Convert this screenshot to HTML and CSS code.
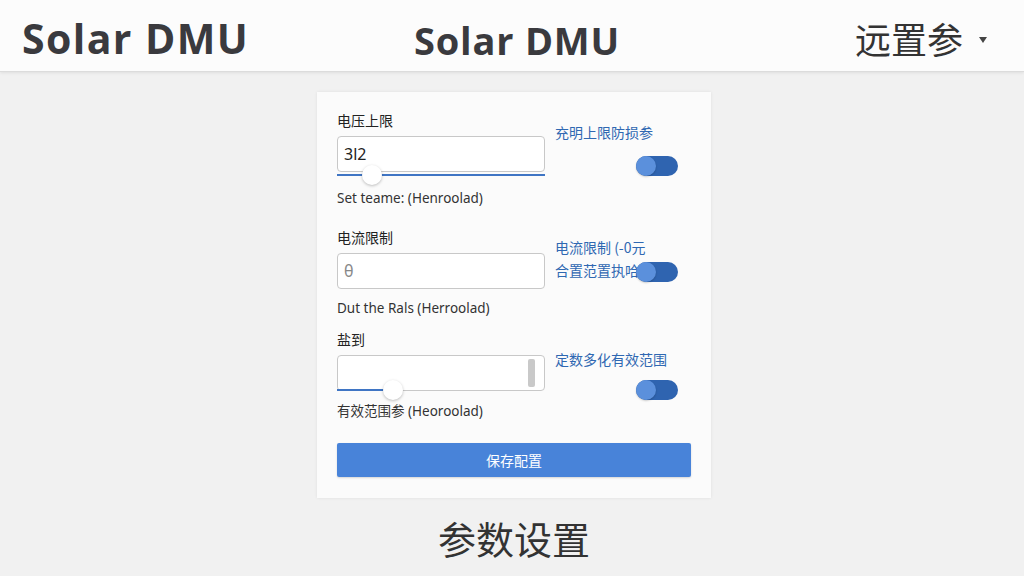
FILE: index.html
```html
<!DOCTYPE html>
<html lang="zh">
<head>
<meta charset="utf-8">
<link rel="stylesheet" href="styles.css">
</head>
<body>
<header class="topbar">
  <div class="brand">Solar DMU</div>
  <div class="brand center">Solar DMU</div>
  <div class="menu">远置参 <span class="caret"></span></div>
</header>
<main class="page">
  <section class="card">
    <div class="row r1">
      <div class="left">
        <div class="label">电压上限</div>
        <div class="input"><span class="val">3l2</span></div>
        <div class="slider"><div class="fill" style="width:100%"></div><div class="thumb" style="left:35px"></div></div>
        <div class="hint">Set teame: (Henroolad)</div>
      </div>
      <div class="right">
        <div class="note">充明上限防损参</div>
        <div class="toggle t1"><span class="knob"></span></div>
      </div>
    </div>
    <div class="row r2">
      <div class="left">
        <div class="label">电流限制</div>
        <div class="input"><span class="ph">θ</span></div>
        <div class="hint h2">Dut the Rals (Herroolad)</div>
      </div>
      <div class="right">
        <div class="note">电流限制 (-0元</div>
        <div class="note-row">
          <span class="note">合置范置执哈</span>
          <div class="toggle t2"><span class="knob"></span></div>
        </div>
      </div>
    </div>
    <div class="row r3">
      <div class="left">
        <div class="label">盐到</div>
        <div class="input tall"><span class="scroll"></span></div>
        <div class="slider s3"><div class="fill" style="width:56px"></div><div class="thumb" style="left:56px"></div></div>
        <div class="hint h3">有效范围参 (Heoroolad)</div>
      </div>
      <div class="right">
        <div class="note">定数多化有效范围</div>
        <div class="toggle t3"><span class="knob"></span></div>
      </div>
    </div>
    <button class="save">保存配置</button>
  </section>
  <h1 class="title">参数设置</h1>
</main>
</body>
</html>
```
FILE: styles.css
```css
* { box-sizing: border-box; }
html, body { margin: 0; padding: 0; }
body {
  width: 1024px;
  height: 576px;
  overflow: hidden;
  background: #f1f1f1;
  font-family: "Noto Sans", "Noto Sans CJK SC", sans-serif;
  color: #333;
}
.topbar {
  height: 72px;
  background: #fcfcfc;
  border-bottom: 1px solid #dcdcdc;
  box-shadow: 0 1px 3px rgba(0,0,0,0.08);
  display: grid;
  grid-template-columns: 1fr auto 1fr;
  align-items: center;
  padding: 0 37px 0 22px;
}
.brand {
  font-family: "Open Sans", sans-serif;
  font-weight: bold;
  font-size: 41px;
  letter-spacing: 1.4px;
  color: #3a3a3e;
  line-height: 1;
  padding-top: 6px;
}
.brand.center {
  font-size: 38px;
  letter-spacing: 0.8px;
  text-align: center;
  padding-top: 8px;
  margin-left: 25px;
}
.menu {
  justify-self: end;
  font-family: "Noto Sans CJK SC", sans-serif;
  font-size: 36px;
  color: #333;
  display: flex;
  align-items: center;
  gap: 16px;
  padding-top: 4px;
}
.caret {
  width: 0; height: 0;
  border-left: 4.5px solid transparent;
  border-right: 4.5px solid transparent;
  border-top: 6px solid #444;
  margin-top: 4px;
}
.page {
  display: flex;
  flex-direction: column;
  align-items: center;
  padding-top: 20px;
  padding-left: 4px;
}
.card {
  width: 394px;
  height: 406px;
  background: #fbfbfb;
  box-shadow: 0 0 3px rgba(0,0,0,0.08);
  padding: 19px 20px 0 20px;
  display: flex;
  flex-direction: column;
}
.row { display: flex; gap: 10px; }
.left { width: 208px; display: flex; flex-direction: column; }
.right { flex: 1; display: flex; flex-direction: column; }
.label {
  font-size: 14px;
  color: #222;
  line-height: 20px;
  height: 25px;
}
.input {
  height: 36px;
  border: 1px solid #c8c8c8;
  border-radius: 4px;
  background: #fff;
  display: flex;
  align-items: center;
  padding: 0 6px;
  position: relative;
}
.val { font-size: 16px; color: #222; }
.ph { font-size: 16px; color: #888; }
.scroll {
  position: absolute;
  right: 9px; top: 3px; bottom: 3px;
  width: 7px;
  background: #c9c9c9;
  border-radius: 2px;
}
.slider {
  position: relative;
  height: 6px;
  margin-top: 1px;
}
.fill {
  position: absolute;
  left: 0; top: 1px;
  height: 2px;
  background: #3f75c4;
}
.thumb {
  position: absolute;
  top: -8px;
  width: 20px; height: 20px;
  margin-left: -10px;
  border-radius: 50%;
  background: #fff;
  box-shadow: 0 1px 3px rgba(0,0,0,0.25);
}
.s3 { margin-top: -3px; }
.hint {
  font-size: 13.5px;
  color: #333;
  margin-top: 10px;
  line-height: 18px;
}
.h2 { margin-top: 10px; }
.h3 { margin-top: 8px; }
.note {
  font-family: "Noto Sans CJK SC", sans-serif;
  font-size: 14px;
  color: #2f68b2;
  line-height: 22px;
  white-space: nowrap;
}
.toggle {
  width: 42px; height: 20px;
  border-radius: 10px;
  background: #2f64b0;
  position: relative;
  align-self: flex-end;
  margin-right: 13px;
}
.knob {
  position: absolute;
  left: 0; top: 0;
  width: 20px; height: 20px;
  border-radius: 50%;
  background: #5b90dc;
  box-shadow: 0 1px 2px rgba(0,0,0,0.2);
}
.r1 .right { padding-top: 10px; }
.t1 { margin-top: 13px; }
.r2 { margin-top: 21px; }
.r2 .right { padding-top: 8px; }
.r2 .note { line-height: 23px; }
.note-row { display: grid; align-items: center; }
.note-row > * { grid-area: 1 / 1; }
.note-row .toggle { justify-self: end; }
.r3 { margin-top: 13px; }
.r3 .right { padding-top: 18px; }
.t3 { margin-top: 10px; }
.save {
  margin-top: 23px;
  height: 34px;
  border: none;
  border-radius: 2px;
  background: #4883d9;
  color: #fff;
  font-family: "Noto Sans CJK SC", sans-serif;
  font-size: 14px;
  box-shadow: 0 1px 2px rgba(0,0,0,0.15);
}
.title {
  margin: 12px 0 0;
  font-family: "Noto Sans CJK SC", sans-serif;
  font-weight: normal;
  font-size: 38px;
  color: #333;
}
```
